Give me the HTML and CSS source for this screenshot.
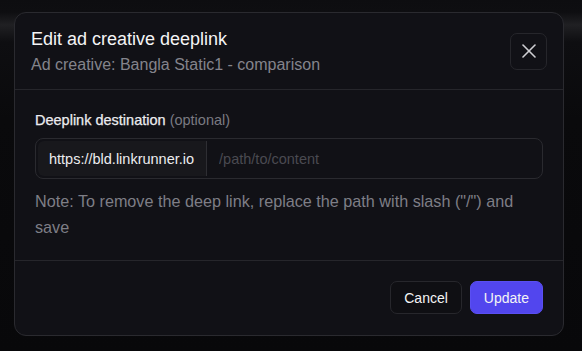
FILE: index.html
```html
<!DOCTYPE html>
<html lang="en">
<head>
	<meta charset="UTF-8">
	<title>Edit ad creative deeplink</title>
	<link rel="stylesheet" href="styles.css">
</head>
<body>
	<div class="dialog">
		<div class="dialog-header">
			<div class="titles">
				<h2 class="title">Edit ad creative deeplink</h2>
				<p class="subtitle">Ad creative: Bangla Static1 - comparison</p>
			</div>
			<button class="close" aria-label="Close">
				<svg width="14" height="14" viewBox="0 0 14 14" fill="none" stroke="currentColor" stroke-width="1.6" stroke-linecap="round">
					<line x1="1" y1="1" x2="13" y2="13"/>
					<line x1="13" y1="1" x2="1" y2="13"/>
				</svg>
			</button>
		</div>

		<div class="dialog-body">
			<label class="label" for="path">Deeplink destination <span class="optional">(optional)</span></label>
			<div class="input-group">
				<span class="prefix">https://bld.linkrunner.io</span>
				<input type="text" id="path" placeholder="/path/to/content">
			</div>
			<p class="note">Note: To remove the deep link, replace the path with slash ("/") and save</p>
		</div>

		<div class="dialog-footer">
			<button class="btn btn-cancel">Cancel</button>
			<button class="btn btn-primary">Update</button>
		</div>
	</div>
</body>
</html>
```

FILE: styles.css
```css
*{
	margin: 0;
	padding: 0;
	box-sizing: border-box;
}
body{
	font-family: "Liberation Sans", Arial, sans-serif;
	background: linear-gradient(to bottom, #0d0d10 0, #0e0e11 12px, #202023 25px, #0e0e11 42px, #0a0a0c 120px, #08080a 100%);
	min-height: 351px;
	padding: 12px 18px 16px 14px;
}
.dialog{
	width: 550px;
	background: #111116;
	border: 1px solid #2a2a2f;
	border-radius: 12px;
}
.dialog-header{
	display: flex;
	justify-content: space-between;
	align-items: center;
	padding: 12px 16px;
	border-bottom: 1px solid #26262b;
}
.title{
	font-size: 18px;
	line-height: 28px;
	font-weight: normal;
	color: #f4f4f5;
}
.subtitle{
	font-size: 16px;
	line-height: 24px;
	color: #84848c;
}
.close{
	display: flex;
	justify-content: center;
	align-items: center;
	width: 37px;
	height: 37px;
	background: #111116;
	border: 1px solid #26262b;
	border-radius: 7px;
	color: #cfcfd3;
}
.dialog-body{
	padding: 20px 20px 20px;
	border-bottom: 1px solid #26262b;
}
.label{
	display: block;
	font-size: 14.5px;
	line-height: 20px;
	color: #ececef;
	-webkit-text-stroke: 0.25px #ececef;
}
.optional{
	color: #7a7a82;
	-webkit-text-stroke: 0;
}
.input-group{
	display: flex;
	margin-top: 8px;
	height: 41px;
	padding: 2px;
	border: 1px solid #2a2a2f;
	border-radius: 8px;
	background: #111116;
}
.prefix{
	display: flex;
	align-items: center;
	padding: 0 12px 0 11px;
	font-size: 14.5px;
	color: #ececef;
	background: #18181c;
	border-right: 1px solid #2e2e33;
	border-radius: 6px 0 0 6px;
	white-space: nowrap;
}
.input-group input{
	flex: 1;
	border: 0;
	outline: none;
	background: transparent;
	padding: 0 12px;
	font-family: "Liberation Sans", Arial, sans-serif;
	font-size: 14.5px;
	color: #ececef;
}
.input-group input::placeholder{
	color: #4a4a51;
}
.note{
	margin-top: 9px;
	font-size: 16.2px;
	line-height: 26px;
	color: #7e7e86;
}
.dialog-footer{
	display: flex;
	justify-content: flex-end;
	gap: 8px;
	padding: 20px 20px 21px;
}
.btn{
	height: 33px;
	padding: 0 13px;
	border-radius: 7px;
	font-family: "Liberation Sans", Arial, sans-serif;
	font-size: 14px;
	color: #f4f4f5;
}
.btn-cancel{
	background: #0f0f13;
	border: 1px solid #27272c;
}
.btn-primary{
	background: #5246ee;
	border: 1px solid #5a4ff2;
}
```
